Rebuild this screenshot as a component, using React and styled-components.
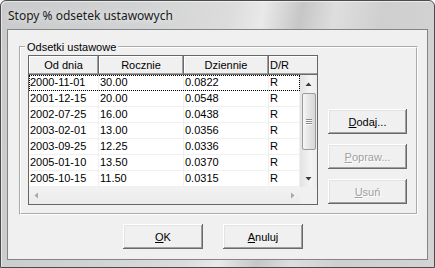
import React from 'react';
import styled, { createGlobalStyle } from 'styled-components';

const rates = [
  { date: '2000-11-01', year: '30.00', day: '0.0822', kind: 'R' },
  { date: '2001-12-15', year: '20.00', day: '0.0548', kind: 'R' },
  { date: '2002-07-25', year: '16.00', day: '0.0438', kind: 'R' },
  { date: '2003-02-01', year: '13.00', day: '0.0356', kind: 'R' },
  { date: '2003-09-25', year: '12.25', day: '0.0336', kind: 'R' },
  { date: '2005-01-10', year: '13.50', day: '0.0370', kind: 'R' },
  { date: '2005-10-15', year: '11.50', day: '0.0315', kind: 'R' },
];

// last column has no width: it runs to the right edge of the list
const columns = [
  { title: 'Od dnia', width: 70 },
  { title: 'Rocznie', width: 85 },
  { title: 'Dziennie', width: 85 },
  { title: 'D/R' },
];

const GlobalStyle = createGlobalStyle`
  html, body {
    margin: 0;
    padding: 0;
    background: #ffffff;
  }
  body {
    font-family: 'Liberation Sans', Arial, sans-serif;
    font-size: 11px;
    color: #000;
  }
`;

const Window = styled.div`
  box-sizing: border-box;
  width: 435px;
  height: 268px;
  display: flex;
  flex-direction: column;
  padding: 0 6px 7px 6px;
  border: 1px solid #4c4c4c;
  border-radius: 6px 6px 0 0;
  background: linear-gradient(
    100deg,
    #c9cacb 0%,
    #d2d3d4 30%,
    #dcdcdc 48%,
    #e9e9e9 55%,
    #c6c6c6 63%,
    #dedede 70%,
    #cfcfcf 80%,
    #d4d4d4 100%
  );
  box-shadow: inset 1px 1px 0 rgba(255, 255, 255, 0.55);
`;

const TitleBar = styled.div`
  height: 28px;
  flex-shrink: 0;
  display: flex;
  align-items: center;
  padding-left: 1px;
  font-family: 'Noto Sans', 'Open Sans', sans-serif;
  font-size: 12px;
  color: #1a1a1a;
  text-shadow: 0 0 6px rgba(255, 255, 255, 0.9);
`;

const Client = styled.div`
  flex: 1;
  display: flex;
  flex-direction: column;
  background: #f0f0f0;
  border: 1px solid #848484;
`;

const Group = styled.fieldset`
  box-sizing: border-box;
  margin: 10px 9px 0 11px;
  height: 175px;
  padding: 1px 8px 8px 7px;
  border: 2px groove #ffffff;
  display: flex;
  align-items: flex-end;
  gap: 10px;
  min-width: 0;
`;

const Legend = styled.legend`
  padding: 0 2px;
  margin-left: -3px;
  line-height: 14px;
`;

const ListView = styled.div`
  box-sizing: border-box;
  width: 290px;
  height: 150px;
  flex-shrink: 0;
  align-self: flex-start;
  border: 1px solid #666666;
  background: #ffffff;
  display: flex;
  flex-direction: column;
`;

const Header = styled.div`
  display: flex;
  height: 19px;
  border-bottom: 1px solid #6a6a6a;
  box-sizing: border-box;
  background: #f0f0f0;
`;

const HeaderCell = styled.div`
  box-sizing: border-box;
  width: ${(p) => (p.$width ? `${p.$width}px` : 'auto')};
  flex: ${(p) => (p.$width ? '0 0 auto' : '1')};
  height: 18px;
  line-height: 18px;
  text-align: ${(p) => (p.$width ? 'center' : 'left')};
  padding-left: ${(p) => (p.$width ? '0' : '1px')};
  white-space: nowrap;
  box-shadow: ${(p) =>
    p.$width
      ? 'inset -1px -1px 0 #a0a0a0, inset 1px 1px 0 #ffffff'
      : 'inset 0 -1px 0 #a0a0a0, inset 1px 1px 0 #ffffff'};
  border-right: ${(p) => (p.$width ? '1px solid #6a6a6a' : 'none')};
`;

const Body = styled.div`
  display: flex;
  height: 112px;
`;

const Rows = styled.div`
  flex: 1;
  display: flex;
  flex-direction: column;
`;

const Row = styled.div`
  box-sizing: border-box;
  display: flex;
  height: 16px;
  line-height: 15px;
  border-bottom: 1px solid #f0f0f0;
  outline: ${(p) => (p.$focused ? '1px dotted #000' : 'none')};
  outline-offset: -1px;
`;

const Cell = styled.div`
  box-sizing: border-box;
  width: ${(p) => (p.$width ? `${p.$width}px` : 'auto')};
  flex: ${(p) => (p.$width ? '0 0 auto' : '1')};
  padding-left: 1px;
  white-space: nowrap;
  border-right: 1px solid #f0f0f0;
`;

const VScroll = styled.div`
  width: 17px;
  display: flex;
  flex-direction: column;
  background: linear-gradient(to right, #e3e3e3, #f3f3f3 60%, #ececec);
`;

const ArrowButton = styled.div`
  width: 17px;
  height: 17px;
  flex-shrink: 0;
  display: flex;
  align-items: center;
  justify-content: center;
`;

const Track = styled.div`
  flex: 1;
  padding: 1px 1px 0 2px;
`;

const Thumb = styled.div`
  box-sizing: border-box;
  height: 57px;
  border: 1px solid #9b9b9b;
  border-radius: 2px;
  background: linear-gradient(to right, #f6f6f6, #e6e6e6 45%, #d7d7d7);
  display: flex;
  flex-direction: column;
  align-items: center;
  justify-content: center;
  gap: 1px;
`;

const Grip = styled.span`
  width: 6px;
  height: 1px;
  background: #8a8a8a;
  box-shadow: 0 1px 0 #fafafa;
`;

const HScrollRow = styled.div`
  display: flex;
  height: 17px;
`;

const HScroll = styled.div`
  flex: 1;
  display: flex;
  justify-content: space-between;
  align-items: center;
  padding: 0 5px;
  background: linear-gradient(to bottom, #f2f2f2, #ebebeb);
`;

const Corner = styled.div`
  width: 17px;
  background: #f0f0f0;
`;

const SideButtons = styled.div`
  display: flex;
  flex-direction: column;
  gap: 10px;
  padding-bottom: 1px;
`;

const Button = styled.button`
  box-sizing: border-box;
  width: ${(p) => p.$width}px;
  height: 25px;
  padding: 0;
  border: none;
  background: #f0f0f0;
  font-family: 'Liberation Sans', Arial, sans-serif;
  font-size: 11px;
  color: ${(p) => (p.disabled ? '#a0a0a0' : '#000')};
  text-shadow: ${(p) => (p.disabled ? '1px 1px 0 #ffffff' : 'none')};
  box-shadow: inset -1px -1px 0 #696969, inset 1px 1px 0 #ffffff,
    inset -2px -2px 0 #a0a0a0, inset 2px 2px 0 #e3e3e3;
`;

const Footer = styled.div`
  display: flex;
  gap: 20px;
  margin-top: 9px;
  padding-left: 115px;
`;

const Arrow = ({ dir, color }) => {
  const shapes = {
    up: '0.5,4 3.5,0.5 6.5,4',
    down: '0.5,0 3.5,3.5 6.5,0',
    left: '4,0.5 0.5,3.5 4,6.5',
    right: '0,0.5 3.5,3.5 0,6.5',
  };
  const vertical = dir === 'up' || dir === 'down';
  return (
    <svg width={vertical ? 7 : 4} height={vertical ? 4 : 7}>
      <polygon points={shapes[dir]} fill={color} />
    </svg>
  );
};

const App = () => {
  return (
    <>
      <GlobalStyle />
      <Window>
        <TitleBar>Stopy % odsetek ustawowych</TitleBar>
        <Client>
          <Group>
            <Legend>Odsetki ustawowe</Legend>
            <ListView>
              <Header>
                {columns.map((c) => (
                  <HeaderCell key={c.title} $width={c.width}>
                    {c.title}
                  </HeaderCell>
                ))}
              </Header>
              <Body>
                <Rows>
                  {rates.map((r, i) => (
                    <Row key={r.date} $focused={i === 0}>
                      <Cell $width={70}>{r.date}</Cell>
                      <Cell $width={85}>{r.year}</Cell>
                      <Cell $width={85}>{r.day}</Cell>
                      <Cell>{r.kind}</Cell>
                    </Row>
                  ))}
                </Rows>
                <VScroll>
                  <ArrowButton>
                    <Arrow dir='up' color='#3a3a3a' />
                  </ArrowButton>
                  <Track>
                    <Thumb>
                      <Grip />
                      <Grip />
                      <Grip />
                    </Thumb>
                  </Track>
                  <ArrowButton>
                    <Arrow dir='down' color='#3a3a3a' />
                  </ArrowButton>
                </VScroll>
              </Body>
              <HScrollRow>
                <HScroll>
                  <Arrow dir='left' color='#a8a8a8' />
                  <Arrow dir='right' color='#a8a8a8' />
                </HScroll>
                <Corner />
              </HScrollRow>
            </ListView>
            <SideButtons>
              <Button $width={79}>
                <u>D</u>odaj...
              </Button>
              <Button $width={79} disabled>
                <u>P</u>opraw...
              </Button>
              <Button $width={79} disabled>
                <u>U</u>suń
              </Button>
            </SideButtons>
          </Group>
          <Footer>
            <Button $width={80}>
              <u>O</u>K
            </Button>
            <Button $width={80}>
              <u>A</u>nuluj
            </Button>
          </Footer>
        </Client>
      </Window>
    </>
  );
};

export default App;
